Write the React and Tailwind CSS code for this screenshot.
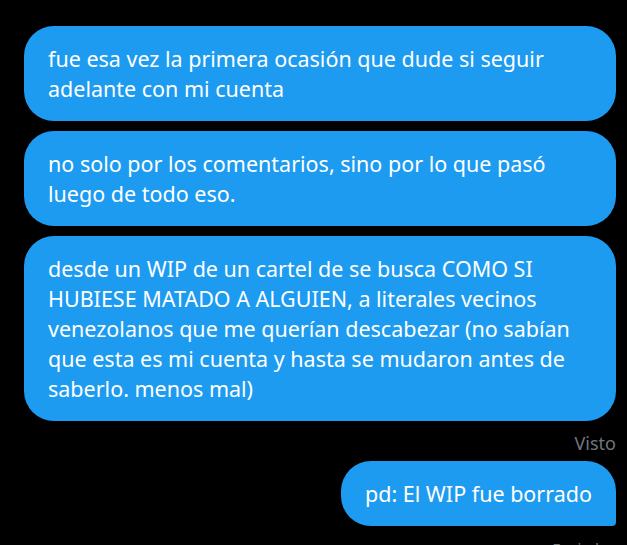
export default function App() {
    const msgs = [
        ["fue esa vez la primera ocasión que dude si seguir", "adelante con mi cuenta"],
        ["no solo por los comentarios, sino por lo que pasó", "luego de todo eso."],
        [
            "desde un WIP de un cartel de se busca COMO SI",
            "HUBIESE MATADO A ALGUIEN, a literales vecinos",
            "venezolanos que me querían descabezar (no sabían",
            "que esta es mi cuenta y hasta se mudaron antes de",
            "saberlo. menos mal)",
        ],
    ]

    return (
        <div className="w-[627px] h-[545px] overflow-hidden bg-black pt-[26px] pl-6 pr-[11px]" style={{ fontFamily: "'Noto Sans', 'Open Sans', sans-serif" }}>
            <div className="flex flex-col gap-[10px]">
                {msgs.map((lines, i) => (
                    <div key={i} className="bg-[#1d9bf0] text-white rounded-[30px] px-6 py-[17.5px] text-[21.5px] leading-[30px]">
                        {lines.map((l, j) => (
                            <div key={j} className="whitespace-nowrap">{l}</div>
                        ))}
                    </div>
                ))}
            </div>
            <div className="text-right text-[#71767b] text-[18px] leading-6 mt-[10px]">Visto</div>
            <div className="flex justify-end mt-[6px]">
                <div className="bg-[#1d9bf0] text-white rounded-[30px] rounded-br-[4px] px-6 py-[17.5px] text-[21.5px] leading-[30px] whitespace-nowrap">
                    pd: El WIP fue borrado
                </div>
            </div>
            <div className="text-right text-[#71767b] text-[15px] leading-5 mt-[12px] pr-2">Enviado</div>
        </div>
    )
}
